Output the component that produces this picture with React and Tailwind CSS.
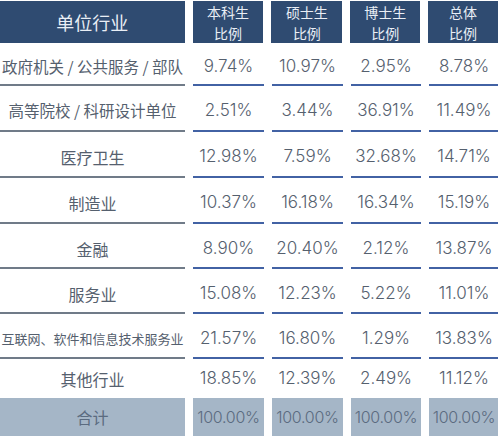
const rows = [
  { name: '政府机关 / 公共服务 / 部队', v: ['9.74%', '10.97%', '2.95%', '8.78%'], h: 'h-[43px]', size: 'text-[15.5px]' },
  { name: '高等院校 / 科研设计单位', v: ['2.51%', '3.44%', '36.91%', '11.49%'], h: 'h-[46px]', size: 'text-[15.5px]' },
  { name: '医疗卫生', v: ['12.98%', '7.59%', '32.68%', '14.71%'], h: 'h-[46px]', size: 'text-[16px]' },
  { name: '制造业', v: ['10.37%', '16.18%', '16.34%', '15.19%'], h: 'h-[46px]', size: 'text-[16px]' },
  { name: '金融', v: ['8.90%', '20.40%', '2.12%', '13.87%'], h: 'h-[45px]', size: 'text-[16px]' },
  { name: '服务业', v: ['15.08%', '12.23%', '5.22%', '11.01%'], h: 'h-[45px]', size: 'text-[16px]' },
  { name: '互联网、软件和信息技术服务业', v: ['21.57%', '16.80%', '1.29%', '13.83%'], h: 'h-[45px]', size: 'text-[13px]' },
];

const heads = [
  ['本科生', '比例'],
  ['硕士生', '比例'],
  ['博士生', '比例'],
  ['总体', '比例'],
];

const font = { fontFamily: '"Noto Sans CJK SC", "Noto Sans", sans-serif' };
const numFont = "font-['Inter','Noto_Sans_CJK_SC',sans-serif] font-light";

export default function App() {
  return (
    <div className="w-[498px] h-[436px] overflow-hidden bg-white text-[#55606e]" style={font}>
      {/* header */}
      <div className="mt-[1px] flex gap-x-2 h-[42px]">
        <div className="w-[185px] bg-[#2f4b71] text-[#e9eef5] flex items-center justify-center text-[18px]">
          单位行业
        </div>
        {heads.map((h, i) => (
          <div
            key={i}
            className={`${i < 2 ? 'w-[71px]' : 'w-[70px]'} bg-[#2f4b71] text-[#e9eef5] flex items-center justify-center text-center text-[14px] leading-[20.5px] pt-[1px]`}
          >
            <p>
              {h[0]}
              <br />
              {h[1]}
            </p>
          </div>
        ))}
      </div>

      {/* body */}
      {rows.map((r) => (
        <div key={r.name} className={`flex gap-x-2 ${r.h}`}>
          <div className={`w-[185px] shrink-0 border-b-2 border-[#707b88] flex items-center justify-center pt-[6px] whitespace-nowrap ${r.size}`}>
            {r.name}
          </div>
          {r.v.map((v, i) => (
            <div
              key={i}
              className={`${i < 2 ? 'w-[71px]' : 'w-[70px]'} shrink-0 border-b-2 border-[#4262a4] flex items-center justify-center pt-[6px] text-[17px] ${numFont}`}
            >
              {v}
            </div>
          ))}
        </div>
      ))}

      {/* last row, no line */}
      <div className="flex gap-x-2 h-[39px]">
        <div className="w-[185px] shrink-0 flex items-center justify-center text-[16px]">其他行业</div>
        {['18.85%', '12.39%', '2.49%', '11.12%'].map((v, i) => (
          <div
            key={i}
            className={`${i < 2 ? 'w-[71px]' : 'w-[70px]'} shrink-0 flex items-center justify-center text-[17px] ${numFont}`}
          >
            {v}
          </div>
        ))}
      </div>

      {/* total */}
      <div className="flex gap-x-2 h-[38px] text-[#5b6b80]">
        <div className="w-[185px] shrink-0 bg-[#a5b6c7] flex items-center justify-center text-[16px]">合计</div>
        {[0, 1, 2, 3].map((i) => (
          <div
            key={i}
            className={`${i < 2 ? 'w-[71px]' : 'w-[70px]'} shrink-0 bg-[#a5b6c7] flex items-center justify-center whitespace-nowrap text-[16px] tracking-[-0.3px] ${numFont}`}
          >
            100.00%
          </div>
        ))}
      </div>
    </div>
  );
}
